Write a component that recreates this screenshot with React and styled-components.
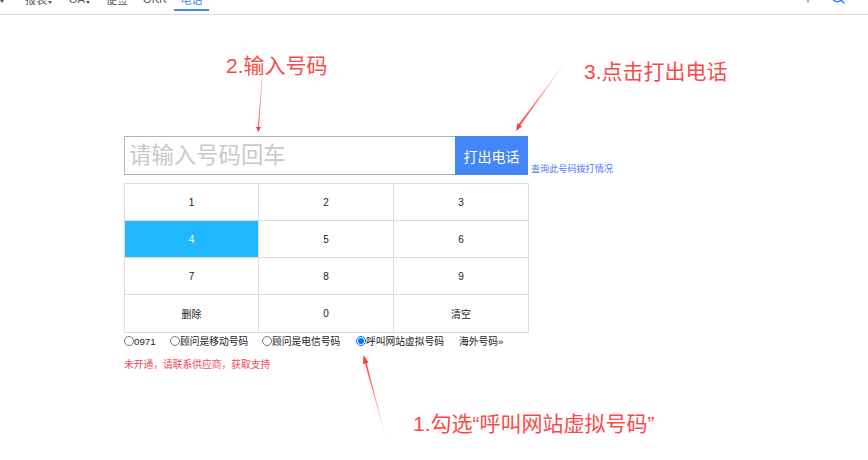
import React, { useState } from "react";
import styled, { createGlobalStyle } from "styled-components";
import { Plus, Search } from "lucide-react";

const FONT = `"Liberation Sans", "Noto Sans CJK SC", sans-serif`;

const GlobalStyle = createGlobalStyle`
  html, body {
    margin: 0;
    padding: 0;
    background: #fff;
    font-family: ${FONT};
  }
  * { box-sizing: border-box; }
`;

const navItems = [
  { label: "报表", caret: true, width: 45 },
  { label: "OA", caret: true, width: 37 },
  { label: "便签", width: 38 },
  { label: "OKR", width: 38 },
  { label: "电话", width: 35, active: true },
];

const keys = ["1", "2", "3", "4", "5", "6", "7", "8", "9", "删除", "0", "清空"];

const radios = [
  { label: "0971", width: 46 },
  { label: "顾问是移动号码", width: 92 },
  { label: "顾问是电信号码", width: 94 },
  { label: "呼叫网站虚拟号码", width: 103, checked: true },
];

const App = () => {
  const [phone, setPhone] = useState("");
  const [activeKey] = useState("4");

  return (
    <Page>
      <GlobalStyle />
      <TopBar>
        <EdgeCaret />
        <NavList>
          {navItems.map((item) => (
            <NavItem key={item.label} $active={item.active} $width={item.width}>
              {item.label}
              {item.caret && <Caret />}
            </NavItem>
          ))}
        </NavList>
        <NavIcons>
          <Plus size={16} strokeWidth={2} />
          <Search size={16} strokeWidth={2.4} />
        </NavIcons>
      </TopBar>

      <Main>
        <DialRow>
          <PhoneInput
            placeholder="请输入号码回车"
            value={phone}
            onChange={(e) => setPhone(e.target.value)}
          />
          <CallBtn type="button">打出电话</CallBtn>
          <QueryLink>查询此号码拨打情况</QueryLink>
        </DialRow>

        <KeyPad>
          {keys.map((k) => (
            <Key key={k} $active={k === activeKey}>
              {k}
            </Key>
          ))}
        </KeyPad>

        <RadioRow>
          {radios.map((r) => (
            <RadioLabel key={r.label} $width={r.width}>
              <Radio type="radio" name="line" defaultChecked={r.checked} />
              {r.label}
            </RadioLabel>
          ))}
          <MoreLink>海外号码»</MoreLink>
        </RadioRow>

        <Notice>未开通，请联系供应商，获取支持</Notice>
      </Main>

      <StepText $x={226} $y={52}>2.输入号码</StepText>
      <StepText $x={584} $y={58}>3.点击打出电话</StepText>
      <StepText $x={413} $y={410}>1.勾选“呼叫网站虚拟号码”</StepText>

      <Arrows width="868" height="460" viewBox="0 0 868 460">
        <defs>
          <linearGradient id="fadeA" gradientUnits="userSpaceOnUse" x1="262" y1="76" x2="258" y2="132">
            <stop offset="0" stopColor="#ff3b3b" stopOpacity="0.35" />
            <stop offset="1" stopColor="#ff3b3b" />
          </linearGradient>
          <linearGradient id="fadeB" gradientUnits="userSpaceOnUse" x1="563" y1="65" x2="516" y2="130">
            <stop offset="0" stopColor="#ff3b3b" stopOpacity="0.1" />
            <stop offset="1" stopColor="#ff3b3b" />
          </linearGradient>
          <linearGradient id="fadeC" gradientUnits="userSpaceOnUse" x1="385" y1="436" x2="364" y2="356">
            <stop offset="0" stopColor="#ff3b3b" stopOpacity="0.05" />
            <stop offset="1" stopColor="#ff3b3b" />
          </linearGradient>
        </defs>
        <polygon points="262,76 262.6,76 258.9,128 257.8,128" fill="url(#fadeA)" />
        <polygon points="258.4,132 256,127 261,127" fill="#ff3b3b" />
        <polygon points="563,65 563.4,65.3 520,126 518.3,124.8" fill="url(#fadeB)" />
        <polygon points="516,131 517.5,123 522,126.5" fill="#ff3b3b" />
        <polygon points="385,436 385.4,436 366.5,362 364.7,362.6" fill="url(#fadeC)" />
        <polygon points="363.5,355 363,364 368.5,362.5" fill="#ff3b3b" />
      </Arrows>
    </Page>
  );
};

const Page = styled.div`
  position: relative;
  width: 868px;
  height: 460px;
  overflow: hidden;
  background: #fff;
`;

const TopBar = styled.div`
  display: flex;
  align-items: flex-end;
  height: 15px;
  border-bottom: 1px solid #dcdcdc;
  overflow: hidden;
`;

const NavList = styled.div`
  display: flex;
  align-items: flex-end;
  margin-left: 12px;
`;

const NavItem = styled.div`
  display: flex;
  align-items: center;
  justify-content: center;
  flex: none;
  width: ${(p) => p.$width}px;
  height: 23px;
  margin-bottom: 3px;
  font-size: 11px;
  color: ${(p) => (p.$active ? "#3f87f5" : "#555")};
  border-bottom: 2px solid ${(p) => (p.$active ? "#3f87f5" : "transparent")};
`;

const Caret = styled.span`
  display: inline-block;
  margin-left: 1px;
  margin-top: 7px;
  border-left: 2px solid transparent;
  border-right: 2px solid transparent;
  border-top: 3px solid #555;
`;

const EdgeCaret = styled(Caret)`
  flex: none;
  margin-left: 0;
  margin-top: 0;
  margin-bottom: 11px;
`;

const NavIcons = styled.div`
  display: flex;
  align-items: flex-end;
  gap: 14px;
  margin-left: auto;
  margin-right: 22px;
  margin-bottom: 9px;
  color: #3f87f5;
`;

const Main = styled.div`
  display: flex;
  flex-direction: column;
  padding: 121px 0 0 124px;
`;

const DialRow = styled.div`
  display: flex;
  align-items: stretch;
  height: 39px;
`;

const PhoneInput = styled.input`
  width: 331px;
  height: 39px;
  padding: 0 4px;
  border: 1px solid #b4b4b4;
  border-right: none;
  outline: none;
  font-family: ${FONT};
  font-size: 22.4px;
  color: #333;

  &::placeholder {
    color: #c9c9c9;
    opacity: 1;
  }
`;

const CallBtn = styled.button`
  width: 73px;
  height: 39px;
  border: none;
  padding: 0;
  background: #4287f5;
  color: #fff;
  font-family: ${FONT};
  font-size: 14px;
`;

const QueryLink = styled.a`
  align-self: flex-end;
  margin-left: 3px;
  font-size: 9.1px;
  line-height: 12px;
  color: #4a7cf0;
`;

const KeyPad = styled.div`
  display: grid;
  grid-template-columns: 134px 135px 135px;
  grid-template-rows: 37px 37px 37px 38px;
  width: 405px;
  margin-top: 8px;
  border-top: 1px solid #ddd;
  border-left: 1px solid #ddd;
`;

const Key = styled.div`
  display: flex;
  align-items: center;
  justify-content: center;
  border-right: 1px solid #ddd;
  border-bottom: 1px solid #ddd;
  background: ${(p) => (p.$active ? "#1fb8ff" : "#fff")};
  color: ${(p) => (p.$active ? "#fff" : "#222")};
  font-size: 10px;
`;

const RadioRow = styled.div`
  display: flex;
  align-items: center;
  height: 16px;
  font-size: 9.75px;
  color: #222;
`;

const RadioLabel = styled.label`
  display: flex;
  align-items: center;
  flex: none;
  width: ${(p) => p.$width}px;
`;

const Radio = styled.input`
  width: 10px;
  height: 10px;
  margin: 0;
  flex: none;
`;

const MoreLink = styled.a`
  color: #222;
`;

const Notice = styled.div`
  margin-top: 9px;
  font-size: 9.75px;
  line-height: 14px;
  color: #f5475b;
`;

const StepText = styled.div`
  position: absolute;
  left: ${(p) => p.$x}px;
  top: ${(p) => p.$y}px;
  font-size: 21px;
  line-height: 28px;
  color: #f94a4a;
  white-space: nowrap;
`;

const Arrows = styled.svg`
  position: absolute;
  left: 0;
  top: 0;
  pointer-events: none;
`;

export default App;
